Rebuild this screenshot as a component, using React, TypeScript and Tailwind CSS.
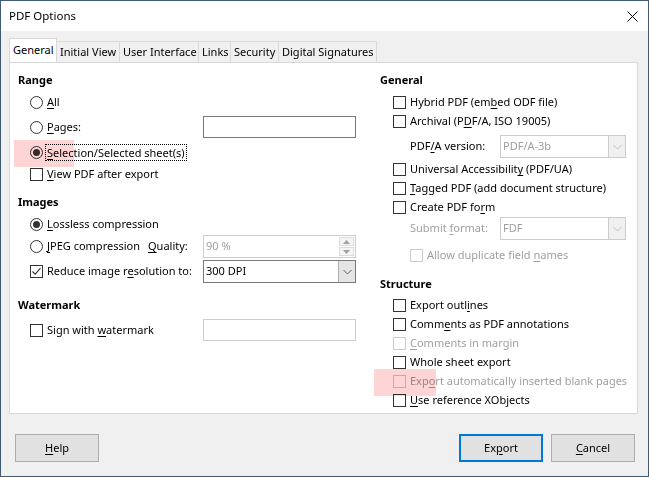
import React from "react";

const font = "font-['Noto_Sans',sans-serif]";

// label with an underlined mnemonic letter
const Mn = ({ text, at }: { text: string; at: number }) => {
  if (at < 0) return <>{text}</>;
  return (
    <>
      {text.slice(0, at)}
      <span className="underline decoration-1 underline-offset-[2px]">{text[at]}</span>
      {text.slice(at + 1)}
    </>
  );
};

const Check = ({ checked, disabled }: { checked?: boolean; disabled?: boolean }) => (
  <span
    className={`flex h-[13px] w-[13px] shrink-0 items-center justify-center border bg-white ${
      disabled ? "border-[#cccccc]" : "border-[#333333]"
    }`}
  >
    {checked && (
      <svg width="11" height="11" viewBox="0 0 11 11">
        <path d="M1.5 5.5 L4.2 8.2 L9.5 2.2" fill="none" stroke="#333" strokeWidth="1.1" />
      </svg>
    )}
  </span>
);

const Radio = ({ on }: { on?: boolean }) => (
  <span className="flex h-[13px] w-[13px] shrink-0 items-center justify-center rounded-full border border-[#333333] bg-white">
    {on && <span className="h-[7px] w-[7px] rounded-full bg-[#333333]" />}
  </span>
);

const Chevron = ({ color }: { color: string }) => (
  <svg width="9" height="6" viewBox="0 0 9 6">
    <path d="M0.5 1 L4.5 5 L8.5 1" fill="none" stroke={color} strokeWidth="1" />
  </svg>
);

const Combo = ({ value, disabled, w }: { value: string; disabled?: boolean; w: string }) => (
  <div
    className={`flex h-[23px] ${w} shrink-0 items-stretch border bg-white ${
      disabled ? "border-[#cccccc] text-[#a0a0a0]" : "border-[#7a7a7a] text-black"
    }`}
  >
    <span className="flex flex-1 items-center pl-[2px]">{value}</span>
    <span
      className={`flex w-[17px] items-center justify-center border-l ${
        disabled ? "border-[#cccccc] bg-[#f0f0f0]" : "border-[#adadad] bg-[#e5e5e5]"
      }`}
    >
      <Chevron color={disabled ? "#bfbfbf" : "#606060"} />
    </span>
  </div>
);

const Heading = ({ children, mt }: { children: React.ReactNode; mt: string }) => (
  <div className={`flex h-[16px] items-center font-bold ${mt}`}>{children}</div>
);

const CheckRow = ({
  text,
  at,
  mt = "",
  disabled,
}: {
  text: string;
  at: number;
  mt?: string;
  disabled?: boolean;
}) => (
  <div className={`flex h-[19px] items-center gap-[4px] pl-[13px] ${mt} ${disabled ? "text-[#a0a0a0]" : ""}`}>
    <Check disabled={disabled} />
    <span className="whitespace-nowrap">
      <Mn text={text} at={at} />
    </span>
  </div>
);

const tabs = [
  { name: "General", w: "w-[48px]" },
  { name: "Initial View", w: "w-[64px]" },
  { name: "User Interface", w: "w-[80px]" },
  { name: "Links", w: "w-[33px]" },
  { name: "Security", w: "w-[49px]" },
  { name: "Digital Signatures", w: "w-[99px]" },
];

export default function App() {
  return (
    <div
      className={`relative flex h-[477px] w-[649px] flex-col overflow-hidden border border-[#3f5a74] bg-[#f0f0f0] text-[11px] text-black ${font}`}
    >
      {/* Title bar */}
      <div className="flex h-[30px] items-center justify-between bg-white pl-[8px] pr-[10px]">
        <span className="text-[11.5px]">PDF Options</span>
        <svg width="11" height="11" viewBox="0 0 11 11">
          <path d="M0.5 0.5 L10.5 10.5 M10.5 0.5 L0.5 10.5" stroke="#000" strokeWidth="1" />
        </svg>
      </div>

      <div className="flex flex-1 flex-col px-[8px] pt-[10px]">
        {/* Tabs */}
        <div className="flex h-[21px] items-end">
          {tabs.map((t, i) => (
            <div
              key={t.name}
              className={`${t.w} -mr-px flex items-center whitespace-nowrap border border-b-0 border-[#d9d9d9] pl-[3px] ${
                i === 0 ? "relative z-10 h-[24px] bg-white" : "h-[21px] bg-[#f0f0f0]"
              }`}
            >
              {t.name}
            </div>
          ))}
        </div>

        {/* Panel */}
        <div className="flex h-[352px] w-[629px] border border-[#d9d9d9] bg-white">
          {/* Left column */}
          <div className="flex w-[362px] shrink-0 flex-col pl-[8px] pt-[9px]">
            <Heading mt="">Range</Heading>
            <div className="mt-[3px] flex h-[22px] items-center gap-[4px] pl-[12px]">
              <Radio />
              <span><Mn text="All" at={0} /></span>
            </div>
            <div className="mt-[3px] flex h-[22px] items-center pl-[12px]">
              <div className="flex w-[173px] items-center gap-[4px]">
                <Radio />
                <span><Mn text="Pages:" at={0} /></span>
              </div>
              <div className="h-[22px] w-[153px] border border-[#7a7a7a] bg-white" />
            </div>
            <div className="mt-[3px] flex h-[22px] items-center gap-[3px] pl-[12px]">
              <Radio on />
              <span className="px-px leading-[15px] outline-1 outline-offset-0 outline-dotted outline-black">
                <Mn text="Selection/Selected sheet(s)" at={0} />
              </span>
            </div>
            <div className="flex h-[22px] items-center gap-[4px] pl-[12px]">
              <Check />
              <span><Mn text="View PDF after export" at={0} /></span>
            </div>

            <Heading mt="mt-[9px]">Images</Heading>
            <div className="mt-[3px] flex h-[22px] items-center gap-[4px] pl-[12px]">
              <Radio on />
              <span><Mn text="Lossless compression" at={0} /></span>
            </div>
            <div className="flex h-[23px] items-center pl-[12px]">
              <div className="flex w-[173px] items-center gap-[4px] whitespace-nowrap">
                <Radio />
                <span><Mn text="JPEG compression" at={0} /></span>
                <span className="ml-[4px]"><Mn text="Quality:" at={0} /></span>
              </div>
              <div className="flex h-[23px] w-[153px] items-stretch border border-[#cccccc] bg-white text-[#a0a0a0]">
                <span className="flex flex-1 items-center pl-[2px]">90 %</span>
                <span className="flex w-[16px] flex-col items-center justify-center gap-[1px] py-[1px] pr-[1px]">
                  <span className="flex w-full flex-1 items-center justify-center border border-[#dcdcdc] bg-[#f4f4f4]">
                    <svg width="7" height="4" viewBox="0 0 7 4"><path d="M0 4 L3.5 0 L7 4 Z" fill="#a0a0a0" /></svg>
                  </span>
                  <span className="flex w-full flex-1 items-center justify-center border border-[#dcdcdc] bg-[#f4f4f4]">
                    <svg width="7" height="4" viewBox="0 0 7 4"><path d="M0 0 L3.5 4 L7 0 Z" fill="#a0a0a0" /></svg>
                  </span>
                </span>
              </div>
            </div>
            <div className="mt-[2px] flex h-[23px] items-center pl-[12px]">
              <div className="flex w-[173px] items-center gap-[4px] whitespace-nowrap">
                <Check checked />
                <span><Mn text="Reduce image resolution to:" at={14} /></span>
              </div>
              <Combo value="300 DPI" w="w-[153px]" />
            </div>

            <Heading mt="mt-[14px]">Watermark</Heading>
            <div className="mt-[6px] flex h-[22px] items-center pl-[12px]">
              <div className="flex w-[173px] items-center gap-[4px]">
                <Check />
                <span><Mn text="Sign with watermark" at={10} /></span>
              </div>
              <div className="h-[22px] w-[153px] border border-[#cccccc] bg-white" />
            </div>
          </div>

          {/* Right column */}
          <div className="flex min-w-0 flex-1 flex-col pl-[8px] pt-[9px]">
            <Heading mt="">General</Heading>
            <CheckRow text="Hybrid PDF (embed ODF file)" at={14} mt="mt-[5px]" />
            <CheckRow text="Archival (PDF/A, ISO 19005)" at={11} />
            <div className="mt-[4px] flex h-[23px] items-center pl-[30px]">
              <span className="w-[90px] whitespace-nowrap"><Mn text="PDF/A version:" at={3} /></span>
              <Combo value="PDF/A-3b" disabled w="w-[126px]" />
            </div>
            <CheckRow text="Universal Accessibility (PDF/UA)" at={22} mt="mt-[2px]" />
            <CheckRow text="Tagged PDF (add document structure)" at={0} />
            <CheckRow text="Create PDF form" at={13} />
            <div className="flex h-[23px] items-center pl-[30px] text-[#a0a0a0]">
              <span className="w-[90px] whitespace-nowrap"><Mn text="Submit format:" at={7} /></span>
              <Combo value="FDF" disabled w="w-[126px]" />
            </div>
            <div className="mt-[6px] flex h-[19px] items-center gap-[4px] pl-[30px] text-[#a0a0a0]">
              <Check disabled />
              <span className="whitespace-nowrap"><Mn text="Allow duplicate field names" at={22} /></span>
            </div>

            <Heading mt="mt-[11px]">Structure</Heading>
            <CheckRow text="Export outlines" at={11} mt="mt-[4px]" />
            <CheckRow text="Comments as PDF annotations" at={4} />
            <CheckRow text="Comments in margin" at={0} disabled />
            <CheckRow text="Whole sheet export" at={-1} />
            <CheckRow text="Export automatically inserted blank pages" at={3} disabled />
            <CheckRow text="Use reference XObjects" at={0} />
          </div>
        </div>

        {/* Buttons */}
        <div className="mt-[20px] flex items-center justify-between pl-[6px] pr-[5px]">
          <button className="h-[28px] w-[84px] border border-[#adadad] bg-[#e1e1e1]">
            <Mn text="Help" at={0} />
          </button>
          <div className="flex gap-[8px]">
            <button className="h-[28px] w-[84px] border-2 border-[#0078d7] bg-[#e1e1e1]">
              <Mn text="Export" at={2} />
            </button>
            <button className="h-[28px] w-[84px] border border-[#adadad] bg-[#e1e1e1]">
              <Mn text="Cancel" at={0} />
            </button>
          </div>
        </div>
      </div>

      {/* annotation highlights */}
      <div className="pointer-events-none absolute left-[13px] top-[139px] h-[27px] w-[60px] bg-[#ffd4d4] mix-blend-multiply" />
      <div className="pointer-events-none absolute left-[373px] top-[368px] h-[27px] w-[62px] bg-[#ffd4d4] mix-blend-multiply" />
    </div>
  );
}
